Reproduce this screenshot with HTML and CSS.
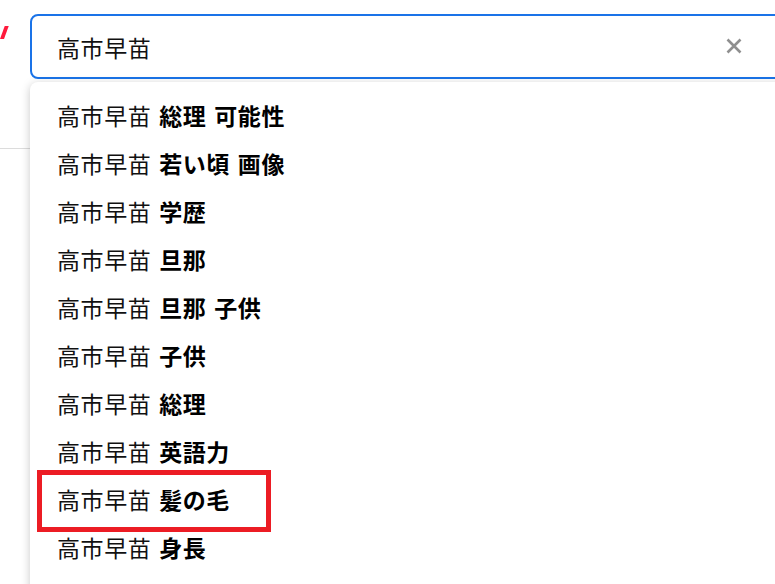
FILE: index.html
```html
<!DOCTYPE html>
<html lang="ja">
<head>
<meta charset="utf-8">
<link rel="stylesheet" href="styles.css">
</head>
<body>
<div class="page">
  <header class="header">
    <div class="logo"></div>
    <div class="search">
      <span class="query">高市早苗</span>
      <svg class="clear" width="16" height="16" viewBox="0 0 16 16"><path d="M1.5 1.5 L14.5 14.5 M14.5 1.5 L1.5 14.5" stroke="#8f8f8f" stroke-width="2.6" fill="none"/></svg>
    </div>
    <ul class="suggest">
      <li class="item">高市早苗 <b>総理 可能性</b></li>
      <li class="item">高市早苗 <b>若い頃 画像</b></li>
      <li class="item">高市早苗 <b>学歴</b></li>
      <li class="item">高市早苗 <b>旦那</b></li>
      <li class="item">高市早苗 <b>旦那 子供</b></li>
      <li class="item">高市早苗 <b>子供</b></li>
      <li class="item">高市早苗 <b>総理</b></li>
      <li class="item">高市早苗 <b>英語力</b></li>
      <li class="item"><span class="marked">高市早苗 <b>髪の毛</b></span></li>
      <li class="item">高市早苗 <b>身長</b></li>
    </ul>
  </header>
  <div class="divider"></div>
</div>
</body>
</html>
```
FILE: styles.css
```css
html, body {
  margin: 0;
  padding: 0;
  background: #ffffff;
  overflow: hidden;
}
body {
  font-family: "Noto Sans CJK JP", "Noto Sans", sans-serif;
  color: #111111;
}
.page {
  width: 775px;
  height: 584px;
  position: relative;
  overflow: hidden;
}
.header {
  position: relative;
  display: flex;
  align-items: flex-start;
  padding-top: 14px;
  height: 134px;
}
.logo {
  flex-shrink: 0;
  width: 4px;
  height: 13px;
  margin-top: 12px;
  margin-right: 26px;
  background: #ff1a3c;
  transform: skewX(-20deg);
  transform-origin: bottom left;
}
.search {
  box-sizing: border-box;
  width: 800px;
  height: 65px;
  flex-shrink: 0;
  border: 2px solid #1a73e8;
  border-radius: 8px;
  display: flex;
  align-items: center;
  padding-left: 25px;
  position: relative;
}
.query {
  font-size: 23px;
  letter-spacing: 0.6px;
  color: #111;
}
.clear {
  position: absolute;
  left: 694px;
  top: 22px;
}
.divider {
  height: 1px;
  background: #dcdcdc;
  width: 100%;
}
.suggest {
  position: absolute;
  left: 30px;
  top: 82px;
  width: 800px;
  height: 560px;
  margin: 0;
  padding: 9px 0 0 0;
  list-style: none;
  background: #fff;
  border-radius: 8px;
  box-shadow: 0 2px 10px rgba(0, 0, 0, 0.22);
  z-index: 2;
}
.item {
  height: 48px;
  display: flex;
  align-items: center;
  padding-left: 27px;
  font-size: 23px;
  letter-spacing: 0.6px;
  word-spacing: 2px;
  white-space: pre;
}
.item b {
  font-weight: 700;
  color: #000;
}
.marked {
  position: relative;
}
.marked::after {
  content: "";
  position: absolute;
  left: -20px;
  width: 234px;
  box-sizing: border-box;
  top: -12px;
  bottom: -16px;
  border: 5px solid #ec1c24;
}
```
